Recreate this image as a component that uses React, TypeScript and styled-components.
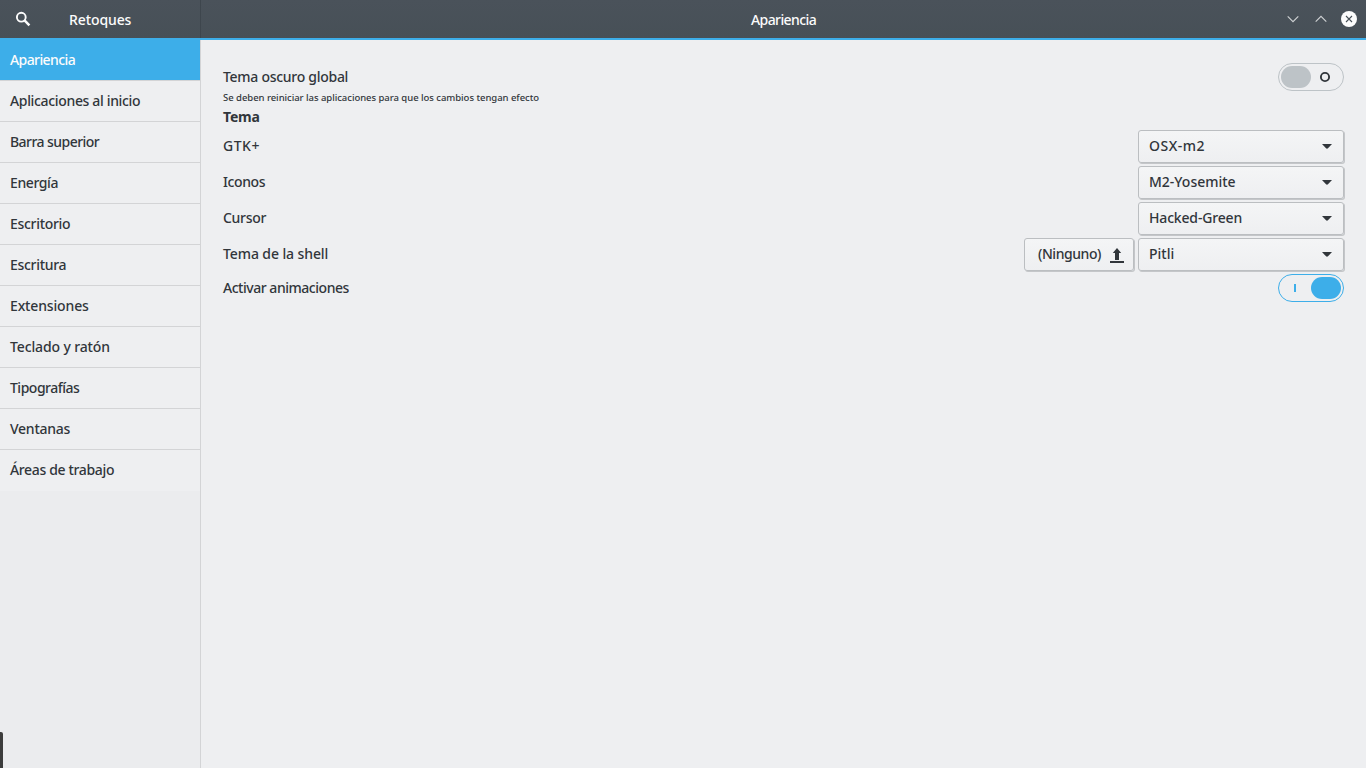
import React from "react";
import styled, { createGlobalStyle } from "styled-components";

const Global = createGlobalStyle`
  * { box-sizing: border-box; }
  body { margin: 0; overflow: hidden; }
`;

const Window = styled.div`
  width: 1366px;
  height: 768px;
  display: flex;
  flex-direction: column;
  position: relative;
  background: #eeeff1;
  color: #31363b;
  font: 500 14px/20px "Noto Sans", sans-serif;
  white-space: nowrap;
`;

const HeaderBar = styled.header`
  height: 40px;
  flex: none;
  display: flex;
  color: #fcfcfc;
  background: linear-gradient(#4a525a, #475057);
  border-bottom: 2px solid #3daee9;
`;

const SideHeader = styled.div`
  width: 201px;
  display: flex;
  align-items: center;
  padding-left: 15px;
  border-right: 1px solid #3e464d;
`;

const SideTitle = styled.div`
  margin-left: 38px;
  padding-top: 2px;
`;

const MainHeader = styled.div`
  flex: 1;
  display: flex;
  align-items: center;
`;

const MainTitle = styled.div`
  margin-left: 550px;
  padding-top: 2px;
  flex: 1;
`;

const WindowButtons = styled.div`
  display: flex;
  align-items: center;
  gap: 12px;
  padding-right: 9px;
`;

const Text = styled.span<{ $spacing?: number }>`
  letter-spacing: ${(p) => p.$spacing ?? 0}px;
`;

const Body = styled.div`
  flex: 1;
  display: flex;
`;

const Sidebar = styled.nav`
  width: 201px;
  background: #ebecee;
  border-right: 1px solid #d3d4d6;
`;

const SideItem = styled.div<{ $active?: boolean }>`
  height: 41px;
  padding: 10px 10px 0;
  color: ${(p) => (p.$active ? "#fcfcfc" : "inherit")};
  background: ${(p) => (p.$active ? "#3daee9" : "#eeeff1")};
  background-clip: padding-box;
  border-bottom: 1px solid #d3d4d6;
  &:last-child { border-bottom: 0; }
`;

const Content = styled.main`
  flex: 1;
  padding: 23px 22px 0;
`;

const Row = styled.div<{ $height: number }>`
  height: ${(p) => p.$height}px;
  display: flex;
  align-items: center;
  justify-content: space-between;
`;

const ThemeList = styled.div`
  margin-bottom: 2px;
`;

const Note = styled.div`
  height: 14px;
  font-size: 9.5px;
  line-height: 14px;
`;

const Heading = styled.h2`
  margin: 2px 0 0;
  height: 21px;
  font-size: 14px;
  line-height: 20px;
  font-weight: 700;
`;

const Controls = styled.div`
  display: flex;
  gap: 4px;
`;

const Button = styled.div<{ $width: number; $inset?: number }>`
  width: ${(p) => p.$width}px;
  height: 33px;
  display: flex;
  align-items: center;
  justify-content: space-between;
  padding: 0 8px 0 ${(p) => p.$inset ?? 10}px;
  border: 1px solid #bbbec1;
  border-radius: 3px;
  background: linear-gradient(#f4f5f6, #eeeff1);
  box-shadow: 1px 1px 0 #c4c6c9;
`;

const Switch = styled.div<{ $on?: boolean }>`
  width: 66px;
  height: 28px;
  display: flex;
  flex-direction: ${(p) => (p.$on ? "row-reverse" : "row")};
  align-items: center;
  padding: 2px;
  border: 1px solid ${(p) => (p.$on ? "#3daee9" : "#bdc3c7")};
  border-radius: 14px;
`;

const Knob = styled.div<{ $on?: boolean }>`
  width: 30px;
  height: 22px;
  border-radius: 11px;
  background: ${(p) => (p.$on ? "#3daee9" : "#bdc3c7")};
`;

const SwitchMark = styled.div`
  flex: 1;
  display: flex;
  justify-content: center;
  padding-right: 2px;
`;

const EdgeHandle = styled.div`
  position: absolute;
  left: 0;
  bottom: 0;
  width: 3px;
  height: 36px;
  border-top-right-radius: 2px;
  background: #3c3c3c;
`;

const SearchIcon = () => (
  <svg width="16" height="16" viewBox="0 0 16 16" fill="none" stroke="#fcfcfc">
    <circle cx="6.3" cy="6.2" r="4.4" strokeWidth="1.9" />
    <path d="M9.3 9.2 14.400 14.300" strokeWidth="2.500" />
  </svg>
);

const Caret = () => (
  <svg width="16" height="17" viewBox="0 0 16 17">
    <path d="M3 6H13L9.2 10.1Q8 11.4 6.800 10.1Z" fill="#31363b" />
  </svg>
);

const UploadIcon = () => (
  <svg width="16" height="17" viewBox="0 0 16 17">
    <path d="M8 2 12.2 7H10V14H6V7H3.8ZM1 15H15V17H1Z" fill="#31363b" />
  </svg>
);

const Chevron = ({ up }: { up?: boolean }) => (
  <svg width="16" height="16" viewBox="0 0 16 16" fill="none" stroke="#d0d3d5">
    <path d={up ? "M2.7 10.7 8 5.4 13.3 10.7" : "M2.7 5.4 8 10.7 13.3 5.4"} strokeWidth="1.1" />
  </svg>
);

const CloseIcon = () => (
  <svg width="16" height="16" viewBox="0 0 16 16">
    <circle cx="8" cy="8" r="8" fill="#fcfcfc" />
    <path d="M5 5 11 11M11 5 5 11" stroke="#475057" strokeWidth="1.1" />
  </svg>
);

const sections: [string, number][] = [
  ["Apariencia", -0.6],
  ["Aplicaciones al inicio", -0.34],
  ["Barra superior", -0.55],
  ["Energía", -0.4],
  ["Escritorio", -0.3],
  ["Escritura", -0.3],
  ["Extensiones", -0.15],
  ["Teclado y ratón", -0.13],
  ["Tipografías", -0.5],
  ["Ventanas", -0.25],
  ["Áreas de trabajo", -0.35],
];

const themes = [
  { label: "GTK+", ls: 0.5, value: "OSX-m2", vs: 0.5 },
  { label: "Iconos", ls: -0.4, value: "M2-Yosemite", vs: 0 },
  { label: "Cursor", ls: -0.3, value: "Hacked-Green", vs: -0.17 },
  { label: "Tema de la shell", ls: -0.1, value: "Pitli", vs: 0, file: "(Ninguno)" },
];

export default function App() {
  return (
    <Window>
      <Global />
      <HeaderBar>
        <SideHeader>
          <SearchIcon />
          <SideTitle><Text $spacing={-0.1}>Retoques</Text></SideTitle>
        </SideHeader>
        <MainHeader>
          <MainTitle><Text $spacing={-0.6}>Apariencia</Text></MainTitle>
          <WindowButtons>
            <Chevron />
            <Chevron up />
            <CloseIcon />
          </WindowButtons>
        </MainHeader>
      </HeaderBar>
      <Body>
        <Sidebar>
          {sections.map(([name, spacing], i) => (
            <SideItem key={name} $active={i === 0}>
              <Text $spacing={spacing}>{name}</Text>
            </SideItem>
          ))}
        </Sidebar>
        <Content>
          <Row $height={28}>
            <Text $spacing={-0.28}>Tema oscuro global</Text>
            <Switch>
              <Knob />
              <SwitchMark>
                <svg width="12" height="12" viewBox="0 0 12 12" fill="none">
                  <ellipse cx="6" cy="6" rx="4.1" ry="4.1" stroke="#31363b" strokeWidth="1.9" />
                </svg>
              </SwitchMark>
            </Switch>
          </Row>
          <Note><Text $spacing={-0.04}>Se deben reiniciar las aplicaciones para que los cambios tengan efecto</Text></Note>
          <Heading><Text $spacing={-0.2}>Tema</Text></Heading>
          <ThemeList>
            {themes.map((t) => (
              <Row key={t.label} $height={36}>
                <Text $spacing={t.ls}>{t.label}</Text>
                <Controls>
                  {t.file && (
                    <Button $width={110} $inset={13}>
                      <Text $spacing={-0.45}>{t.file}</Text>
                      <UploadIcon />
                    </Button>
                  )}
                  <Button $width={206}>
                    <Text $spacing={t.vs}>{t.value}</Text>
                    <Caret />
                  </Button>
                </Controls>
              </Row>
            ))}
          </ThemeList>
          <Row $height={28}>
            <Text $spacing={-0.47}>Activar animaciones</Text>
            <Switch $on>
              <Knob $on />
              <SwitchMark>
                <svg width="12" height="12" viewBox="0 0 12 12">
                  <rect x="5" y="2" width="2" height="8" fill="#3daee9" />
                </svg>
              </SwitchMark>
            </Switch>
          </Row>
        </Content>
      </Body>
      <EdgeHandle />
    </Window>
  );
}
